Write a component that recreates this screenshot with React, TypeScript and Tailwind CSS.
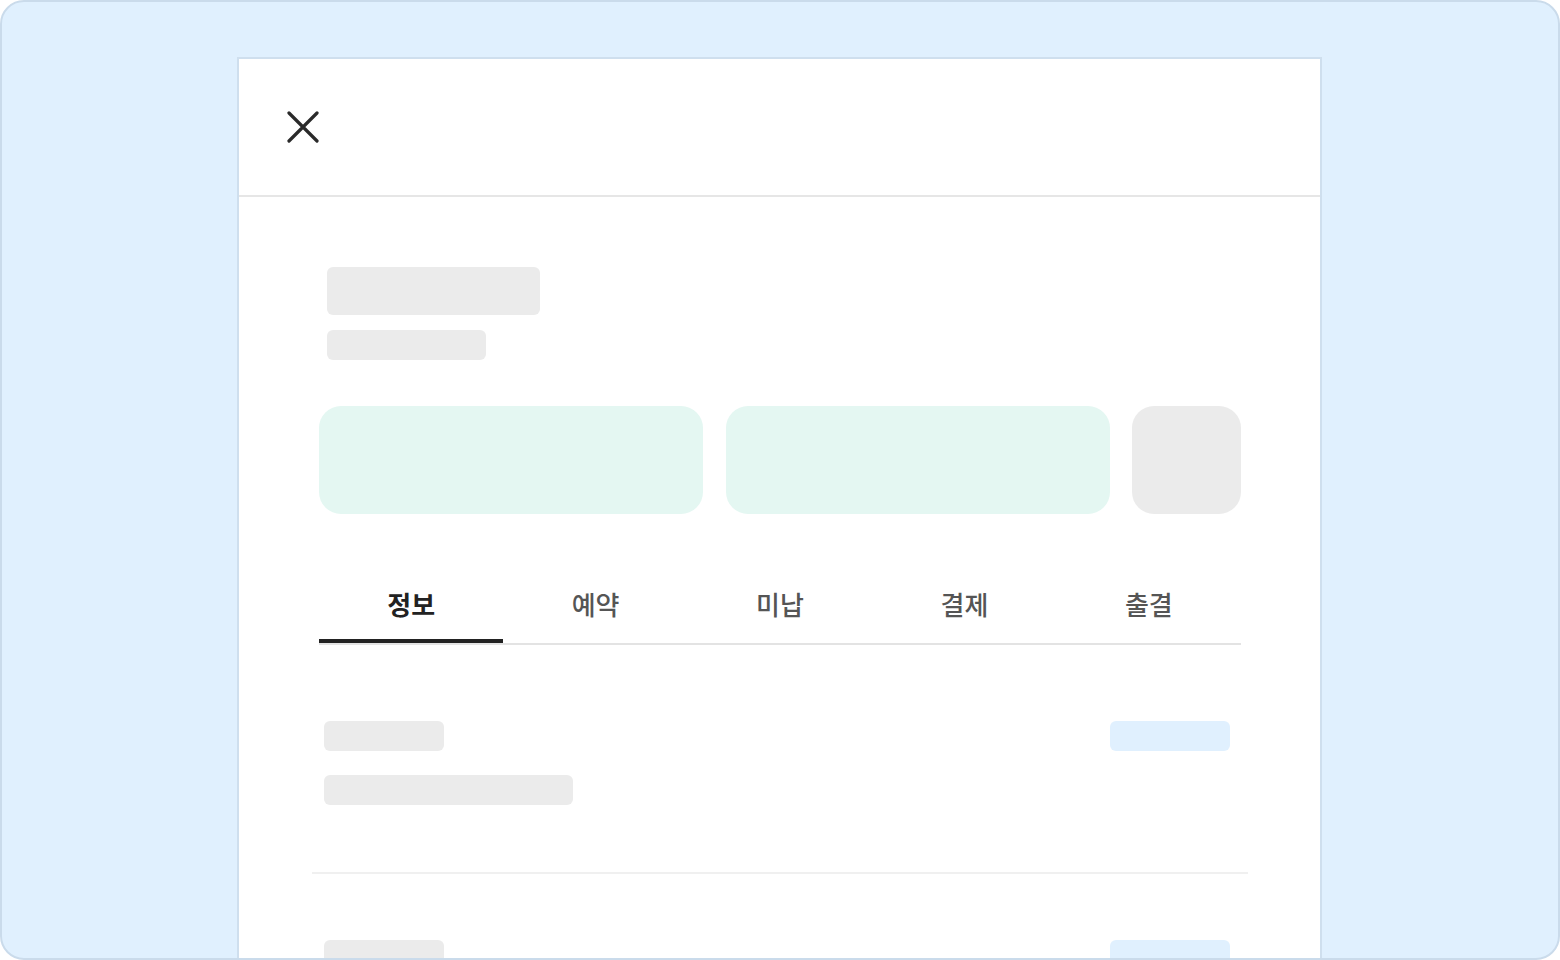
import React, { useState } from "react";

const tabs = ["정보", "예약", "미납", "결제", "출결"];

function Skeleton({ className }: { className: string }) {
  return <div className={`rounded-[6px] bg-[#ebebeb] ${className}`} />;
}

function ListItem({ last }: { last?: boolean }) {
  return (
    <div className={`flex items-start justify-between pl-[12px] pr-[18px] pt-[66px] pb-[67px] ${last ? "" : "border-b-2 border-[#f0f0f0]"}`}>
      <div className="flex flex-col gap-[24px]">
        <Skeleton className="w-[120px] h-[30px]" />
        <Skeleton className="w-[249px] h-[30px]" />
      </div>
      <div className="w-[120px] h-[30px] rounded-[6px] bg-[#e0f0fe]" />
    </div>
  );
}

export default function App() {
  const [active, setActive] = useState(0);

  return (
    <div
      className="h-[960px] w-full overflow-hidden rounded-[24px] border-2 border-[#cadbeb] bg-[#e0f0fe]"
      style={{ fontFamily: '"Noto Sans CJK KR", "Noto Sans", sans-serif' }}
    >
      <div className="ml-[235px] mt-[55px] w-[1085px] min-h-[1000px] border-2 border-[#cfdfee] bg-white">
        {/* header */}
        <div className="flex h-[138px] items-center border-b-2 border-[#e6e6e6] pl-[48px]">
          <button className="block w-[32px] h-[32px]">
            <svg width="32" height="32" viewBox="0 0 32 32" fill="none">
              <path d="M2 2L30 30M30 2L2 30" stroke="#2a2a2a" strokeWidth="3.2" strokeLinecap="round" />
            </svg>
          </button>
        </div>

        <div className="pl-[80px] w-[1002px]">
          {/* title */}
          <div className="pt-[70px] pl-[8px]">
            <Skeleton className="w-[213px] h-[48px]" />
            <Skeleton className="mt-[15px] w-[159px] h-[30px]" />
          </div>

          {/* summary cards */}
          <div className="mt-[46px] flex">
            <div className="w-[384px] h-[108px] rounded-[22px] bg-[#e4f7f2]" />
            <div className="ml-[23px] w-[384px] h-[108px] rounded-[22px] bg-[#e4f7f2]" />
            <div className="ml-[22px] flex-1 h-[108px] rounded-[22px] bg-[#ebebeb]" />
          </div>

          {/* tabs */}
          <div className="mt-[40px] flex border-b-2 border-[#e3e3e3]">
            {tabs.map((t, i) => (
              <button
                key={t}
                onClick={() => setActive(i)}
                className={`flex-1 pt-[32px] pb-[17px] text-[26px] leading-[36px] ${
                  active === i
                    ? "border-b-4 border-[#222222] font-bold text-[#222222]"
                    : "border-b-4 border-transparent font-medium text-[#555555]"
                }`}
              >
                {t}
              </button>
            ))}
          </div>
        </div>

        {/* list */}
        <div className="mt-[10px] ml-[73px] w-[936px]">
          <ListItem />
          <ListItem last />
        </div>
      </div>
    </div>
  );
}
